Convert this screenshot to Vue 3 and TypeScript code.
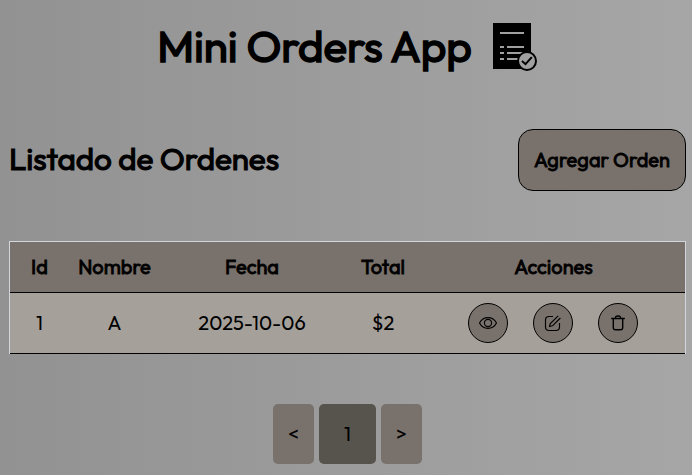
<script setup lang="ts">
import { ref } from 'vue'

interface Order {
  id: number
  name: string
  date: string
  total: number
}

const orders = ref<Order[]>([{ id: 1, name: 'A', date: '2025-10-06', total: 2 }])
const page = ref(1)
</script>

<template>
  <main class="page">
    <header class="top">
      <h1 class="title">Mini Orders App</h1>
      <svg class="logo" viewBox="0 0 46 50" width="46" height="50">
        <path d="M0 0H38V46H0Z" fill="#000" />
        <path d="M7 10H31M7 24H11M14 24H31M7 30H11M14 30H31M7 36H11M14 36H25" stroke="#a0a0a0" stroke-width="2" />
        <circle cx="34" cy="38" r="9" fill="#a0a0a0" stroke="#000" stroke-width="2" />
        <path d="M29 38l3.5 3.2 6.3-7" fill="none" stroke="#000" stroke-width="2" />
      </svg>
    </header>

    <section class="bar">
      <h2 class="subtitle">Listado de Ordenes</h2>
      <button class="add">Agregar Orden</button>
    </section>

    <table class="orders">
      <colgroup>
        <col class="c-id" /><col class="c-name" /><col class="c-date" /><col class="c-total" /><col />
      </colgroup>
      <thead>
        <tr>
          <th>Id</th>
          <th>Nombre</th>
          <th>Fecha</th>
          <th>Total</th>
          <th>Acciones</th>
        </tr>
      </thead>
      <tbody>
        <tr v-for="order in orders" :key="order.id">
          <td>{{ order.id }}</td>
          <td>{{ order.name }}</td>
          <td>{{ order.date }}</td>
          <td>${{ order.total }}</td>
          <td class="cell-actions">
            <div class="actions">
              <button class="round" aria-label="Ver">
                <svg viewBox="0 0 20 20" width="20" height="20" fill="none" stroke="#000" stroke-width="1.15">
                  <path d="M1.5 10C5.2 2.9 14.8 2.9 18.5 10C14.8 17.1 5.2 17.1 1.5 10Z" />
                  <circle cx="10" cy="10" r="3.6" />
                </svg>
              </button>
              <button class="round" aria-label="Editar">
                <svg viewBox="0 0 20 20" width="20" height="20" fill="none" stroke="#000" stroke-width="1.15">
                  <path d="M10 3.5H6Q2.5 3.5 2.5 7V14Q2.5 17.5 6 17.5H13Q16.5 17.5 16.5 14V10" />
                  <path d="M15.2 2.8L7.3 10.6L6.5 13.5L9.5 12.8L17.4 5" />
                </svg>
              </button>
              <button class="round" aria-label="Eliminar">
                <svg viewBox="0 0 20 20" width="20" height="20" fill="none" stroke="#000" stroke-width="1.4">
                  <path d="M3.2 5.5H16.8M5.3 5.5V14.6Q5.3 16.8 7.5 16.8H12.5Q14.7 16.8 14.7 14.6V5.5M7.5 5.5V4.8Q7.5 3 9.2 3H10.8Q12.5 3 12.5 4.8V5.5" />
                </svg>
              </button>
            </div>
          </td>
        </tr>
      </tbody>
    </table>

    <nav class="pager">
      <button class="step" aria-label="Anterior">&lt;</button>
      <button class="step current">{{ page }}</button>
      <button class="step" aria-label="Siguiente">&gt;</button>
    </nav>
  </main>
</template>

<style>
body {
  background: #9b9b9b;
  overflow: hidden;
}
</style>

<style scoped>
.page {
  box-sizing: border-box;
  height: 475px;
  padding: 0 6px 0 9px;
  font-family: Outfit, Lato, sans-serif;
  color: #000;
  background: linear-gradient(to right, #929292, #a6a6a6);
}
.top {
  display: flex;
  justify-content: center;
  align-items: center;
  gap: 21px;
  height: 96px;
  padding-left: 1px;
}
.title,
.subtitle {
  margin: 0;
  padding-bottom: 4px;
  font-weight: 400;
  white-space: nowrap;
}
.title {
  font-size: 44px;
  letter-spacing: -0.15px;
  line-height: 60px;
  -webkit-text-stroke: 1.5px #000;
}
.logo {
  flex: none;
}
.bar {
  display: flex;
  justify-content: space-between;
  align-items: center;
  margin-top: 33px;
  height: 62px;
}
.subtitle {
  font-size: 31.5px;
  letter-spacing: -0.1px;
  -webkit-text-stroke: 1.1px #000;
}
button {
  font: inherit;
  color: inherit;
  padding: 0;
  background: #79716b;
}
.add {
  width: 168px;
  height: 62px;
  padding-bottom: 2px;
  border: 1px solid #000;
  border-radius: 15px;
  font-size: 20px;
  -webkit-text-stroke: 0.8px #000;
}
.orders {
  width: 677px;
  height: 113px;
  margin-top: 50px;
  table-layout: fixed;
  border-collapse: separate;
  border-spacing: 0;
  border: 1px solid #d1d5dc;
  border-bottom: 0;
  font-size: 20px;
  text-align: center;
  box-sizing: border-box;
}
.c-id { width: 59px; }
.c-name { width: 91px; }
.c-date { width: 184px; }
.c-total { width: 78px; }
th,
td {
  padding: 0 0 2px;
  border-bottom: 1px solid #000;
  box-sizing: border-box;
}
th {
  height: 51px;
  font-weight: 400;
  background: #79716b;
  -webkit-text-stroke: 0.8px #000;
}
td {
  height: 61px;
  background: #a6a09b;
}
.cell-actions {
  padding: 0 2px 0 0;
}
.actions {
  display: flex;
  justify-content: center;
  gap: 25px;
}
.round {
  display: flex;
  align-items: center;
  justify-content: center;
  width: 40px;
  height: 40px;
  border: 1px solid #000;
  border-radius: 50%;
}
.pager {
  display: flex;
  justify-content: center;
  gap: 5px;
  margin-top: 50px;
}
.step {
  width: 41px;
  height: 60px;
  padding-bottom: 2px;
  border: 0;
  border-radius: 5px;
  font-size: 20px;
}
.current {
  width: 57px;
  background: #57534d;
}
</style>
